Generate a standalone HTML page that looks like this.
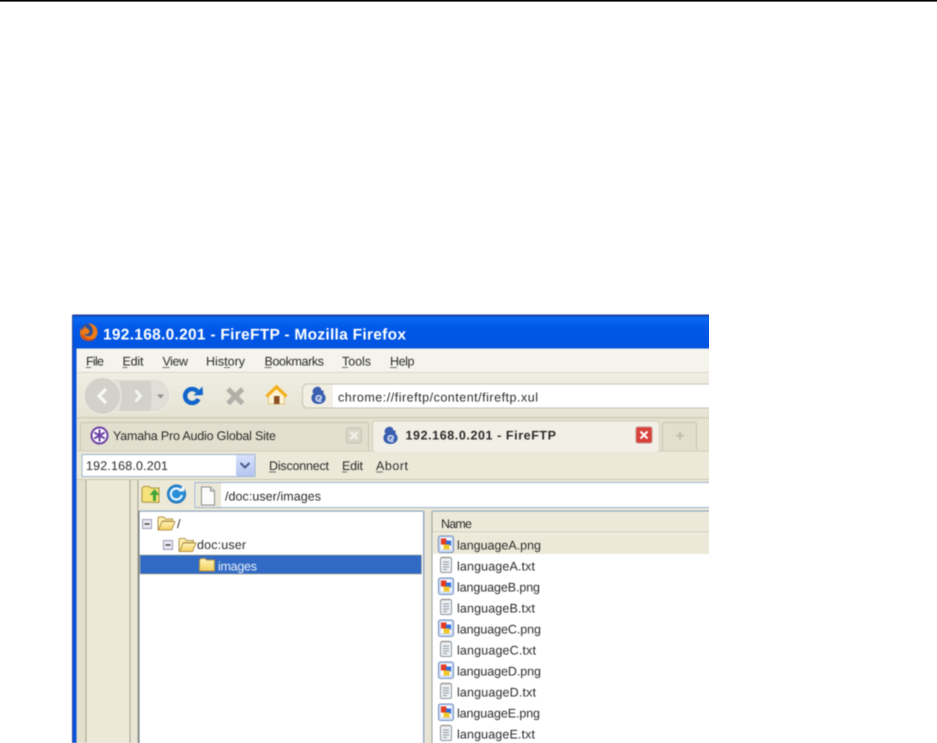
<!DOCTYPE html>
<html><head><meta charset="utf-8"><style>
html,body{margin:0;padding:0;background:#fff;width:937px;height:743px;overflow:hidden}
svg{display:block;position:absolute;left:0;top:0}
text{font-family:"Liberation Sans",sans-serif;font-size:12.5px;fill:#2a2a2a;text-rendering:geometricPrecision}
.b{font-weight:bold}
</style></head><body>
<svg width="937" height="743" viewBox="0 0 937 743" xmlns="http://www.w3.org/2000/svg">
<defs>
<clipPath id="win"><rect x="70" y="312" width="639" height="431"/></clipPath>
<linearGradient id="tb" x1="0" y1="0" x2="0" y2="1"><stop offset="0" stop-color="#0a4ccc"/><stop offset=".12" stop-color="#0a6af0"/><stop offset=".4" stop-color="#0058e8"/><stop offset="1" stop-color="#0054e0"/></linearGradient>
<linearGradient id="nav" x1="0" y1="0" x2="0" y2="1"><stop offset="0" stop-color="#efeee3"/><stop offset="1" stop-color="#e6e3d2"/></linearGradient>
<linearGradient id="fol" x1="0" y1="0" x2="0" y2="1"><stop offset="0" stop-color="#fff6bd"/><stop offset="1" stop-color="#f4cf5c"/></linearGradient>
<linearGradient id="dd" x1="0" y1="0" x2="0" y2="1"><stop offset="0" stop-color="#d8e2fb"/><stop offset="1" stop-color="#b4c6f2"/></linearGradient>
<g id="png">
 <rect x="0.5" y="0.5" width="15" height="16.500" rx="2" fill="#d3def5" stroke="#6f8fbd"/>
 <rect x="3" y="2.500" width="10" height="11.500" fill="#fff"/>
 <rect x="3" y="3" width="5.500" height="6" fill="#e63a20"/>
 <rect x="8" y="5" width="5" height="5" fill="#2f6fdc"/>
 <rect x="5.500" y="9" width="6" height="5" fill="#f3c628"/>
</g>
<g id="txt" fill="none">
 <rect x="1.500" y="1.500" width="11" height="15" rx="1.500" fill="#eef0f2" stroke="#8d95a0"/>
 <path d="M3 1.500h8" stroke="#8a8266" stroke-width="1.500" stroke-dasharray="1 1"/>
 <path d="M4 6h6M4 8.500h6M4 11h6M4 13.500h4" stroke="#8f98a4"/>
</g>
<g id="minus">
 <rect x="0.500" y="0.500" width="9" height="9" fill="#e9e8ee" stroke="#9a9dbc"/>
 <path d="M2.500 5h5" stroke="#222" stroke-width="1.200"/>
</g>
<g id="ofol">
 <path d="M1 3.500 1.500 1.500H7l1.500 2h7v2H5.500L2 14.500 1 14z" fill="#fff1b0" stroke="#b4924a"/>
 <path d="M5 6h13l-3.500 8.500H1.500z" fill="url(#fol)" stroke="#b4924a"/>
</g>
<g id="ftp">
 <path d="M6 0c3-.8 5.500.5 5 3 2.500 0 3.500 2 2.200 3.500 2.800 1.500 3.300 6 .8 8.500-2.500 2.700-8.500 2.700-11 0-2.300-2.500-2-6.500.5-8.500C1.500 4.500 3 1 6 0z" fill="#3a5fb0"/>
 <path d="M11.500 14c-3.500.8-6.500-1.200-5-4 1.200-2 5-1.500 4.800 1-.2 1.300-2.400 1.500-2.800.300" fill="none" stroke="#dfe8f8" stroke-width="1.500"/>
</g>
</defs>
<rect width="937" height="743" fill="#fff"/>
<rect x="0" y="0" width="937" height="1.600" fill="#000"/>

<g clip-path="url(#win)"><g style="filter:blur(0.5px)">
<!-- window -->
<rect x="72.500" y="314.500" width="650" height="429" fill="#ece9d8"/>
<rect x="72.500" y="314.500" width="650" height="34" fill="url(#tb)"/>
<rect x="72.500" y="314.500" width="650" height="1.500" fill="#1f3f9c"/>
<rect x="72.500" y="348" width="4" height="395" fill="#0a52dc"/>
<rect x="72" y="315" width="1" height="428" fill="#2a4a9c"/>

<!-- firefox icon -->
<circle cx="88.500" cy="332" r="8.500" fill="#2a4f9e"/>
<path d="M88 323.500c5.500-.5 9.500 3.500 9.500 8.500s-4 9-9 9-8.500-3.500-8.500-8c0-2 .8-4 1.500-5 0 1.500.5 2 1 2.500.5-2.500 2.500-4 3-5-.3 1.500 0 2.500 1.500 3 2 .5 3 2.500 2 4.500-1 1.500-3.500 2-5 .5 1 3 5 3.500 7.500 1.500 2.500-3 1.500-8-2-10.500z" fill="#ec7b18"/>
<path d="M80.500 333c.5 4.500 4 8 8.500 8 3 0 5.500-1.500 7-3.500-3 2-8 2.500-11-.5-2-1.500-3.500-3-4.500-4z" fill="#d24a10"/>
<text class="b" x="103" y="339.500" style="font-size:15.500px;fill:#fff" textLength="303" lengthAdjust="spacing">192.168.0.201 - FireFTP - Mozilla Firefox</text>

<!-- menu -->
<rect x="76.500" y="348.500" width="650" height="24" fill="#f4f3ec"/>
<rect x="76.500" y="372" width="650" height="1" fill="#dcd8c6"/>
<text x="86" y="365.500" textLength="18" lengthAdjust="spacing">File</text>
<text x="122.500" y="365.500" textLength="21" lengthAdjust="spacing">Edit</text>
<text x="162.500" y="365.500" textLength="25.500" lengthAdjust="spacing">View</text>
<text x="206" y="365.500" textLength="39" lengthAdjust="spacing">History</text>
<text x="264.500" y="365.500" textLength="59.500" lengthAdjust="spacing">Bookmarks</text>
<text x="342" y="365.500" textLength="29" lengthAdjust="spacing">Tools</text>
<text x="390" y="365.500" textLength="24.500" lengthAdjust="spacing">Help</text>
<path d="M86 367.500h5M122.500 367.500h5M162.500 367.500h7M224 367.500h6M264.500 367.500h7M342 367.500h6M390 367.500h7" stroke="#444" stroke-width=".8"/>

<!-- nav bar -->
<rect x="76.500" y="373" width="650" height="45" fill="url(#nav)"/>
<rect x="76.500" y="417" width="650" height="1.500" fill="#d2cebb"/>
<rect x="84" y="379" width="86" height="33" rx="16" fill="#e0dfd7" stroke="#f0efe8"/>
<path d="M120 381h28c3 0 3.500 4 3.500 15s-.5 15-3.500 15h-28z" fill="#d2d2ca"/>
<circle cx="102.500" cy="396" r="18.500" fill="#d2d2cb" stroke="#ebebe4" stroke-width="1.300"/>
<path d="M106 389l-7 7 7 7" fill="none" stroke="#f8f8f4" stroke-width="3.200"/>
<path d="M135.500 390.500l5 5.500-5 5.500" fill="none" stroke="#f6f6f0" stroke-width="2.800"/>
<path d="M157 394.500h7l-3.500 4z" fill="#8e8e86"/>
<!-- reload -->
<path d="M197.500 391.500a7 7 0 1 0 1 7.500" fill="none" stroke="#1166cc" stroke-width="4.500"/>
<path d="M193.500 395.500l9.500-.5-.5-8.500z" fill="#1166cc"/>
<!-- stop -->
<path d="M228 389l14.500 14.500M242.500 389L228 403.500" stroke="#b0b0a9" stroke-width="5"/>
<!-- home -->
<path d="M268.500 396 276.500 388.500l8 7.500v8h-16z" fill="#fdf3d2" stroke="#d7b66a" stroke-width=".8"/>
<path d="M266.500 396.500 276.500 386.800l10 9.700" fill="none" stroke="#f4ae1c" stroke-width="3.200"/>
<rect x="274" y="396" width="5.500" height="8" fill="#8a4f28"/>
<!-- url -->
<rect x="302.500" y="384" width="430" height="24" rx="5" fill="#f1efe4" stroke="#c7c4b2"/>
<rect x="333" y="384.500" width="400" height="23" fill="#fff"/>
<use href="#ftp" x="310" y="387"/>
<text x="338" y="401.500" textLength="200" lengthAdjust="spacing">chrome://fireftp/content/fireftp.xul</text>

<!-- tabs -->
<rect x="76.500" y="418.500" width="650" height="33" fill="#e5e2d0"/>
<rect x="80.500" y="422.500" width="288" height="29" rx="2" fill="#e3dfce" stroke="#c9c5b2"/>
<circle cx="99.500" cy="435.500" r="8" fill="#fff" stroke="#6a3fa6" stroke-width="2"/>
<path d="M99.500 429.500v12M94.300 432.500l10.400 6M94.300 438.500l10.400-6" stroke="#6a3fa6" stroke-width="2"/>
<text x="113" y="440" textLength="163" lengthAdjust="spacing">Yamaha Pro Audio Global Site</text>
<rect x="346.500" y="428" width="15" height="15" rx="2" fill="#d9d6c8" stroke="#c5c2b3"/>
<path d="M350.500 432l7 7M357.500 432l-7 7" stroke="#f4f3ec" stroke-width="2"/>
<rect x="372.500" y="421" width="287" height="31" rx="3" fill="#f2f0e6" stroke="#d2cebb"/>
<use href="#ftp" x="382" y="427"/>
<text class="b" x="405.500" y="439.500" textLength="150.500" lengthAdjust="spacing">192.168.0.201 - FireFTP</text>
<rect x="636" y="427" width="16" height="16" rx="2" fill="#d8403a" stroke="#c58f8a"/>
<path d="M640.500 431.500l7 7M647.500 431.500l-7 7" stroke="#fff" stroke-width="2"/>
<rect x="662.500" y="422.500" width="34" height="29" rx="2" fill="#e3dfce" stroke="#c9c5b2"/>
<path d="M680 431.500v8M676 435.500h8" stroke="#bdbaaa" stroke-width="1.600"/>
<rect x="76.500" y="450.500" width="296" height="1" fill="#d2cebb"/>
<rect x="659" y="450.500" width="70" height="1" fill="#d2cebb"/>

<!-- ftp toolbar -->
<rect x="76.500" y="451.500" width="650" height="28" fill="#ece9d8"/>
<rect x="82" y="454.500" width="173" height="22" fill="#fff" stroke="#9cb4d0"/>
<rect x="236" y="455" width="18.500" height="21" rx="2" fill="url(#dd)"/>
<path d="M240.500 463l4.500 4.500 4.500-4.500" fill="none" stroke="#445a8c" stroke-width="2"/>
<text x="86" y="470" textLength="82" lengthAdjust="spacing">192.168.0.201</text>
<text x="269" y="470" textLength="60" lengthAdjust="spacing">Disconnect</text>
<text x="342" y="470" textLength="21" lengthAdjust="spacing">Edit</text>
<text x="376" y="470" textLength="32" lengthAdjust="spacing">Abort</text>
<path d="M269 472h7M342 472h5M376 472h7" stroke="#444" stroke-width=".8"/>
<rect x="76.500" y="479" width="650" height="1" fill="#c9c5b2"/>

<!-- columns -->
<rect x="76.500" y="480" width="9.500" height="263" fill="#e2dfcc"/>
<rect x="85.500" y="480" width="1" height="263" fill="#a9a692"/>
<rect x="129.500" y="480" width="1" height="263" fill="#a9a692"/>
<rect x="130.500" y="480" width="7" height="263" fill="#e8e5d4"/>
<rect x="137.500" y="480" width="1" height="263" fill="#a29f8c"/>

<!-- up / refresh -->
<path d="M142 502v-14l2-1.500h5l2 1.500h8v14.500z" fill="#f6e27a" stroke="#a8923e"/>
<path d="M153 501v-6h-3.500l5-6 5 6H156v6z" fill="#3fa53a"/>
<circle cx="176.500" cy="494" r="9" fill="#2a8fd8" stroke="#1a68b0"/>
<path d="M181 491a5.500 5.500 0 1 0 .8 4" fill="none" stroke="#fff" stroke-width="2"/>
<path d="M178.500 491.500l6-.2-.8-6z" fill="#f4f8ff"/>

<!-- path -->
<rect x="195" y="482.500" width="530" height="25" fill="#fff" stroke="#9cb4d0"/>
<rect x="196" y="483" width="25" height="24" fill="#e9e7d8"/>
<path d="M201.500 487h9l4 4v14h-13z" fill="#fbfbfb" stroke="#8e8e8e"/>
<path d="M210.500 487v4h4" fill="#dcdcdc" stroke="#8e8e8e"/>
<text x="225" y="500.500" textLength="96" lengthAdjust="spacing">/doc:user/images</text>

<!-- tree -->
<rect x="138.500" y="510.500" width="285" height="240" fill="#fff"/>
<rect x="138.500" y="510.500" width="285" height="1.200" fill="#8fa6c0"/>
<rect x="138.500" y="511" width="1" height="240" fill="#6c7686"/>
<rect x="423" y="511" width="1.400" height="240" fill="#8fa6c0"/>
<use href="#minus" x="142" y="519"/>
<use href="#ofol" x="157" y="515.500"/>
<text x="177" y="528">/</text>
<use href="#minus" x="163" y="540"/>
<use href="#ofol" x="178" y="537"/>
<text x="197" y="549" textLength="49" lengthAdjust="spacing">doc:user</text>
<rect x="140" y="555" width="281.500" height="19" fill="#316ac5" stroke="#b3a76c" stroke-dasharray="1 1"/>
<path d="M199.500 560.500l1-2h5l1 1.500h8v11h-15z" fill="url(#fol)" stroke="#b08c3c"/>
<text x="218" y="570.500" style="fill:#e8effa" textLength="39" lengthAdjust="spacing">images</text>

<!-- splitter -->
<rect x="424.500" y="511" width="7.500" height="240" fill="#e8e5d4"/>
<rect x="431.500" y="511" width="1" height="240" fill="#98a09c"/>

<!-- list -->
<rect x="432.500" y="510.500" width="290" height="240" fill="#fff"/>
<rect x="432.500" y="510.500" width="290" height="1.200" fill="#8fa6c0"/>
<rect x="432.500" y="512" width="290" height="20" fill="#ece9d8"/>
<rect x="432.500" y="531.500" width="290" height="1" fill="#cdcab8"/>
<text x="441" y="528" textLength="31" lengthAdjust="spacing">Name</text>
<rect x="433" y="533" width="290" height="21" fill="#ece9d8"/>

<use href="#png" x="438" y="535.500"/><text x="457" y="549.500" textLength="84" lengthAdjust="spacing">languageA.png</text>
<use href="#txt" x="439" y="556"/><text x="457" y="570.500" textLength="78" lengthAdjust="spacing">languageA.txt</text>
<use href="#png" x="438" y="577.500"/><text x="457" y="591.500" textLength="83" lengthAdjust="spacing">languageB.png</text>
<use href="#txt" x="439" y="598"/><text x="457" y="612.500" textLength="78" lengthAdjust="spacing">languageB.txt</text>
<use href="#png" x="438" y="619.500"/><text x="457" y="633.500" textLength="84" lengthAdjust="spacing">languageC.png</text>
<use href="#txt" x="439" y="640"/><text x="457" y="654.500" textLength="79" lengthAdjust="spacing">languageC.txt</text>
<use href="#png" x="438" y="661.500"/><text x="457" y="675.500" textLength="84" lengthAdjust="spacing">languageD.png</text>
<use href="#txt" x="439" y="682"/><text x="457" y="696.500" textLength="79" lengthAdjust="spacing">languageD.txt</text>
<use href="#png" x="438" y="703.500"/><text x="457" y="717.500" textLength="83" lengthAdjust="spacing">languageE.png</text>
<use href="#txt" x="439" y="724"/><text x="457" y="738.500" textLength="78" lengthAdjust="spacing">languageE.txt</text>
</g></g>
</svg>
</body></html>
